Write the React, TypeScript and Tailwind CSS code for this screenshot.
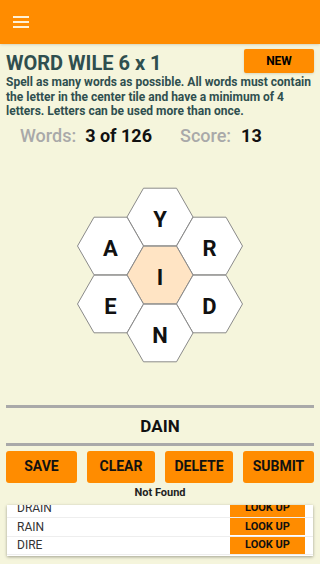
import React from 'react'

const hexes = [
  { l: 'Y', x: 160, y: 42 },
  { l: 'A', x: 110.5, y: 71 },
  { l: 'R', x: 209.5, y: 71 },
  { l: 'I', x: 160, y: 100, center: true },
  { l: 'E', x: 110.5, y: 129 },
  { l: 'D', x: 209.5, y: 129 },
  { l: 'N', x: 160, y: 158 },
]

function hexPoints(cx: number, cy: number, r = 33) {
  const h = 28.8
  return [
    [cx - r, cy],
    [cx - r / 2, cy - h],
    [cx + r / 2, cy - h],
    [cx + r, cy],
    [cx + r / 2, cy + h],
    [cx - r / 2, cy + h],
  ]
    .map((p) => p.join(','))
    .join(' ')
}

const found = ['DRAIN', 'RAIN', 'DIRE']

export default function App() {
  return (
    <div className="min-h-[564px] bg-[#f5f5dc] font-['Roboto',sans-serif] overflow-hidden">
      {/* app bar */}
      <header className="h-[44px] bg-[#ff8c00] flex items-center px-[13px] shadow-sm">
        <div className="flex flex-col gap-[3px] w-[16px]">
          <span className="h-[2px] bg-[#fff1d6]" />
          <span className="h-[2px] bg-[#fff1d6]" />
          <span className="h-[2px] bg-[#fff1d6]" />
        </div>
      </header>

      <div className="px-[6px]">
        <div className="flex justify-between items-start pt-[5px]">
          <h1 className="mt-[2px] text-[20px] leading-[24px] font-bold text-[#2f4f4f]">
            WORD WILE 6 x 1
          </h1>
          <button className="w-[70px] h-[24px] bg-[#ff8c00] rounded-[2px] text-[12px] font-bold text-black shadow-sm">
            NEW
          </button>
        </div>
        <p className="text-[12px] leading-[14.5px] font-bold text-[#2f4f4f]">
          Spell as many words as possible. All words must contain the letter in the center tile and
          have a minimum of 4 letters. Letters can be used more than once.
        </p>

        {/* score row */}
        <div className="mt-[6px] pl-[14px] flex items-center text-[18px] leading-[21px]">
          <span className="text-[#a9a9a9] font-medium">Words:</span>
          <span className="ml-[9px] font-bold text-[#111]">3 of 126</span>
          <span className="ml-[28px] text-[#a9a9a9] font-medium">Score:</span>
          <span className="ml-[10px] font-bold text-[#111]">13</span>
        </div>
      </div>

      {/* hive */}
      <svg width="320" height="200" viewBox="0 0 320 200" className="block mt-[29px]">
        {hexes.map((h) => (
          <g key={h.l}>
            <polygon
              points={hexPoints(h.x, h.y)}
              fill={h.center ? '#ffe4c4' : '#ffffff'}
              stroke="#8a8a8a"
              strokeWidth="1"
            />
            <text
              x={h.x}
              y={h.y + 10}
              textAnchor="middle"
              fontSize="22"
              fontWeight="700"
              fontFamily="Roboto, sans-serif"
              fill="#111"
            >
              {h.l}
            </text>
          </g>
        ))}
      </svg>

      <div className="px-[6px]">
        {/* current word */}
        <div className="mt-[30px] border-y-[3px] border-[#a9a9a9] h-[41px] pt-[3px] flex items-center justify-center">
          <span className="text-[17px] font-bold text-[#111]">DAIN</span>
        </div>

        {/* actions */}
        <div className="mt-[5px] flex justify-between">
          <button className="w-[71px] h-[32px] bg-[#ff8c00] rounded-[3px] text-[14px] font-bold text-[#111]">
            SAVE
          </button>
          <button className="w-[68px] h-[32px] bg-[#ff8c00] rounded-[3px] text-[14px] font-bold text-[#111]">
            CLEAR
          </button>
          <button className="w-[68px] h-[32px] bg-[#ff8c00] rounded-[3px] text-[14px] font-bold text-[#111]">
            DELETE
          </button>
          <button className="w-[71px] h-[32px] bg-[#ff8c00] rounded-[3px] text-[14px] font-bold text-[#111]">
            SUBMIT
          </button>
        </div>
        <div className="text-center text-[11px] leading-[14px] font-bold text-[#222] mt-[3px]">
          Not Found
        </div>

        {/* found words */}
        <div className="mt-[5px] mx-[1px] h-[51px] bg-white overflow-hidden shadow-[0_1px_3px_rgba(0,0,0,0.35)]">
          <div className="-mt-[5px]">
            {found.map((w) => (
              <div
                key={w}
                className="h-[18.5px] flex items-center border-b border-[#eeeeee] pl-[10px] pr-[8px]"
              >
                <span className="flex-1 text-[12px] text-[#333]">{w}</span>
                <span className="w-[75px] h-[17px] bg-[#ff8c00] flex items-center justify-center text-[11px] font-bold text-[#111]">
                  LOOK UP
                </span>
              </div>
            ))}
          </div>
        </div>
      </div>
    </div>
  )
}
